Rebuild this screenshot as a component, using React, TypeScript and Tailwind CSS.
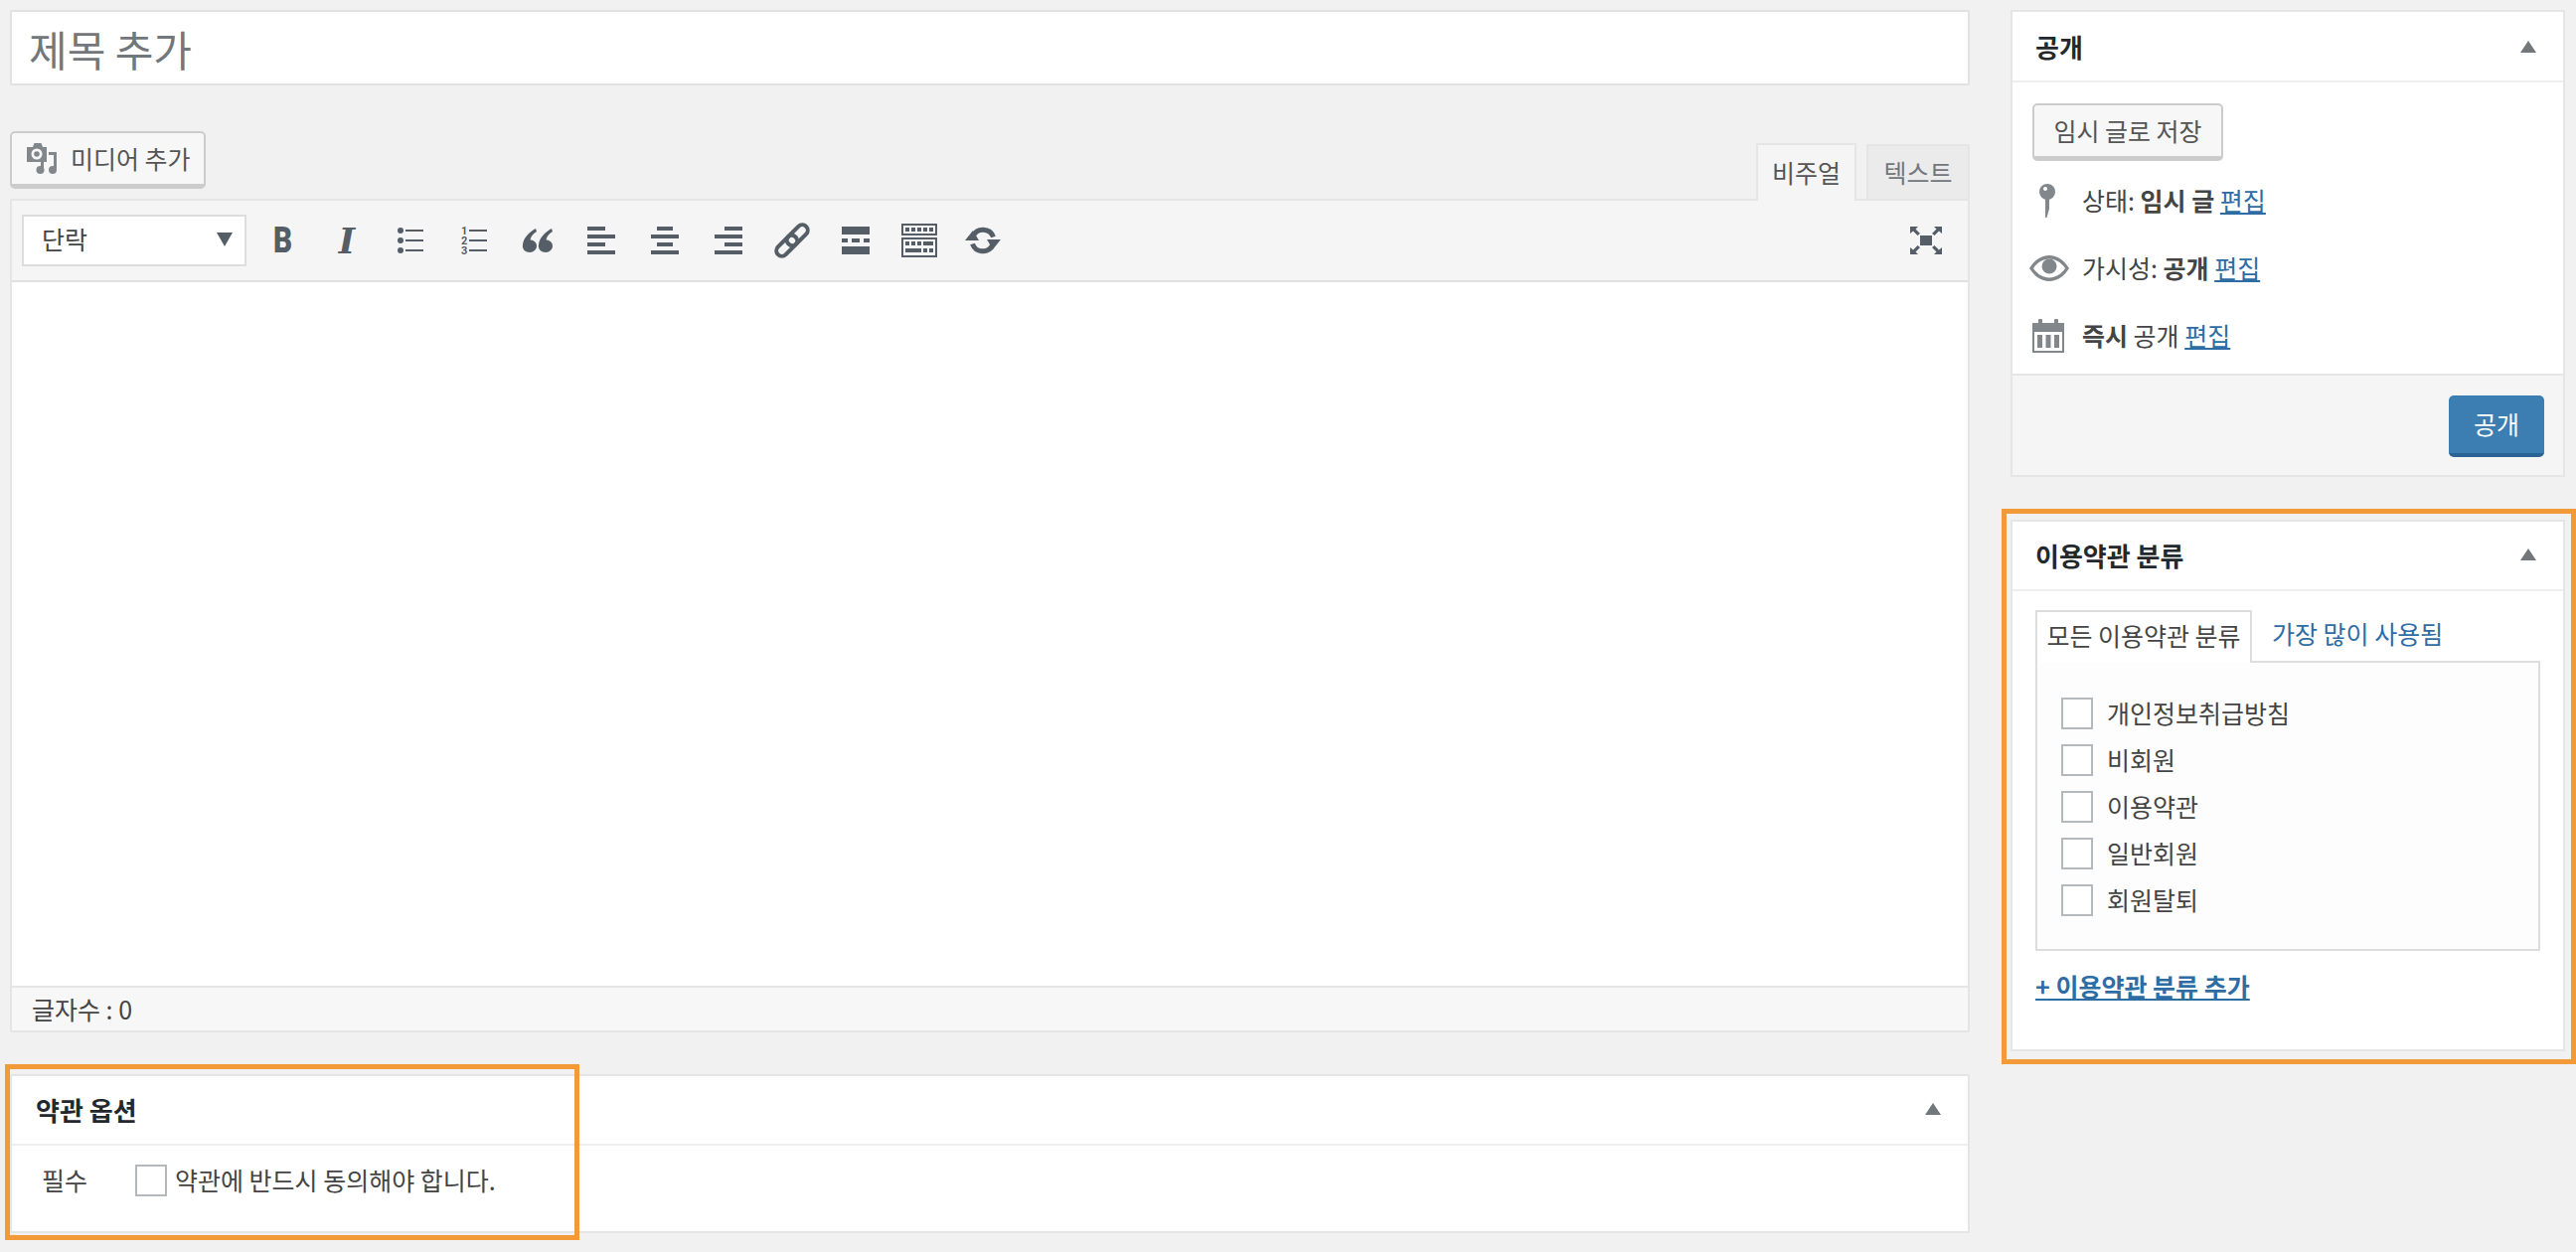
import type { ReactNode } from "react";

const FONT = "font-['Noto_Sans_CJK_KR','Noto_Sans',sans-serif]";

function Triangle() {
  return (
    <svg width="16" height="12" viewBox="0 0 16 12" className="shrink-0">
      <path d="M8 0L16 12H0Z" fill="#72777c" />
    </svg>
  );
}

function MediaIcon() {
  return (
    <svg width="36" height="36" viewBox="0 0 36 36" className="shrink-0">
      <path d="M2 6h6l1.500-4h7L18 6h4v15H2z" fill="#82878c" />
      <circle cx="12" cy="13" r="5.500" fill="#f7f7f7" />
      <circle cx="12" cy="13" r="2.800" fill="#82878c" />
      <path d="M24 11h8v18h-3V14h-5z" fill="#82878c" />
      <circle cx="28" cy="29" r="4" fill="#82878c" />
      <path d="M16 21h3v8h-3z" fill="#82878c" />
      <circle cx="15.500" cy="29" r="4" fill="#82878c" />
    </svg>
  );
}

function ToolButton({ children }: { children: ReactNode }) {
  return (
    <div className="w-[64px] h-[40px] flex items-center justify-center shrink-0 text-[#555d66]">
      {children}
    </div>
  );
}

function Bullets() {
  return (
    <svg width="32" height="32" viewBox="0 0 32 32" fill="#555d66">
      <circle cx="6" cy="6" r="3" />
      <circle cx="6" cy="16" r="3" />
      <circle cx="6" cy="26" r="3" />
      <rect x="11" y="5" width="18" height="2" />
      <rect x="11" y="15" width="18" height="2" />
      <rect x="11" y="25" width="18" height="2" />
    </svg>
  );
}

function Numbers() {
  return (
    <svg width="32" height="32" viewBox="0 0 32 32" fill="#555d66">
      <text x="3" y="10" fontSize="11" fontWeight="700" fontFamily="Roboto, sans-serif">1</text>
      <text x="3" y="20" fontSize="11" fontWeight="700" fontFamily="Roboto, sans-serif">2</text>
      <text x="3" y="30" fontSize="11" fontWeight="700" fontFamily="Roboto, sans-serif">3</text>
      <rect x="11" y="5" width="18" height="2" />
      <rect x="11" y="15" width="18" height="2" />
      <rect x="11" y="25" width="18" height="2" />
    </svg>
  );
}

function Quote() {
  const mark =
    "M13 0C6 4 1 9 0 16c-1 5 3 8 7 8s7-3 7-6.500-3-6-6.500-6C8 8 10.500 5 14 3z";
  return (
    <svg width="32" height="24" viewBox="0 0 32 24" fill="#555d66">
      <path d={mark} transform="translate(1 0)" />
      <path d={mark} transform="translate(17 0)" />
    </svg>
  );
}

function AlignIcon({ side }: { side: "left" | "center" | "right" }) {
  const shortX = side === "left" ? 0 : side === "center" ? 6 : 10;
  return (
    <svg width="28" height="28" viewBox="0 0 28 28" fill="#555d66">
      <rect x={shortX} y="0" width={side === "center" ? 16 : 18} height="4" />
      <rect x="0" y="8" width="28" height="4" />
      <rect x={shortX} y="16" width={side === "center" ? 16 : 18} height="4" />
      <rect x="0" y="24" width="28" height="4" />
    </svg>
  );
}

function LinkIcon() {
  return (
    <svg width="36" height="36" viewBox="0 0 36 36" fill="none" stroke="#555d66">
      <g transform="rotate(-45 18 18)">
        <rect x="-2" y="12.500" width="25" height="11" rx="5.500" strokeWidth="4" />
        <rect x="13" y="12.500" width="25" height="11" rx="5.500" strokeWidth="4" />
      </g>
    </svg>
  );
}

function MoreIcon() {
  return (
    <svg width="28" height="28" viewBox="0 0 28 28" fill="#555d66">
      <rect x="0" y="0" width="28" height="8" />
      <rect x="0" y="12" width="6" height="4" />
      <rect x="10" y="12" width="8" height="4" />
      <rect x="22" y="12" width="6" height="4" />
      <rect x="0" y="20" width="28" height="8" />
    </svg>
  );
}

function KitchenIcon() {
  return (
    <svg width="36" height="34" viewBox="0 0 36 34" fill="#555d66">
      <path d="M0 0h36v12H0zM2 2v8h32V2z" fillRule="evenodd" />
      <path d="M0 14h36v20H0zM2 16v16h32V16z" fillRule="evenodd" />
      <rect x="4" y="4" width="4" height="4" />
      <rect x="10" y="4" width="4" height="4" />
      <rect x="16" y="4" width="4" height="4" />
      <rect x="22" y="4" width="4" height="4" />
      <rect x="28" y="4" width="4" height="4" />
      <rect x="4" y="18" width="4" height="4" />
      <rect x="10" y="18" width="4" height="4" />
      <rect x="16" y="18" width="4" height="4" />
      <rect x="22" y="18" width="10" height="4" />
      <rect x="4" y="25" width="16" height="4" />
      <rect x="22" y="25" width="4" height="4" />
      <rect x="28" y="25" width="4" height="4" />
    </svg>
  );
}

function RefreshIcon() {
  return (
    <svg width="36" height="30" viewBox="0 0 36 30" fill="none">
      <path d="M8 11A11 11 0 0 1 28.500 11.500" stroke="#555d66" strokeWidth="5" />
      <path d="M28 19A11 11 0 0 1 7.500 18.500" stroke="#555d66" strokeWidth="5" />
      <path d="M0 15L8 5l6 10z" fill="#555d66" />
      <path d="M36 14L28 24l-6-10z" fill="#555d66" />
    </svg>
  );
}

function FullscreenIcon() {
  return (
    <svg width="32" height="28" viewBox="0 0 32 28" fill="#555d66">
      <rect x="10" y="9" width="12" height="10" />
      <path d="M0 0h8L5.500 2.500 10 7 7.500 9 3 4.500 0 7z" />
      <path d="M32 0h-8l2.500 2.500L22 7l2.500 2L29 4.500 32 7z" />
      <path d="M0 28h8l-2.500-2.500L10 21l-2.500-2L3 23.500 0 21z" />
      <path d="M32 28h-8l2.500-2.500L22 21l2.500-2L29 23.500 32 21z" />
    </svg>
  );
}

function PinIcon() {
  return (
    <svg width="32" height="36" viewBox="0 0 32 36" fill="#82878c">
      <circle cx="15" cy="9" r="8" />
      <path d="M13 14h4v12l-2.500 9H13z" />
      <circle cx="13" cy="6" r="2" fill="#fff" />
    </svg>
  );
}

function EyeIcon() {
  return (
    <svg width="40" height="26" viewBox="0 0 40 26" fill="#82878c">
      <path
        fillRule="evenodd"
        d="M0 13C5 5 12 0 20 0s15 5 20 13c-5 8-12 13-20 13S5 21 0 13zm4 0c4 6 10 9.500 16 9.500S32 19 36 13C32 7 26 3.500 20 3.500S8 7 4 13z"
      />
      <circle cx="20" cy="11" r="7.500" />
    </svg>
  );
}

function CalendarIcon() {
  return (
    <svg width="32" height="34" viewBox="0 0 32 34" fill="#82878c">
      <path
        fillRule="evenodd"
        d="M0 4h6V1.500a2 2 0 0 1 4 0V4h12V1.500a2 2 0 0 1 4 0V4h6v30H0zm2 9v19h28V13z"
      />
      <rect x="5" y="16" width="5" height="13" />
      <rect x="13.500" y="16" width="5" height="13" />
      <rect x="22" y="16" width="5" height="13" />
    </svg>
  );
}

function BoxHeader({ title, height }: { title: string; height: string }) {
  return (
    <div
      className={`${height} flex items-center justify-between border-b-2 border-[#eeeeee] pl-[23px] pr-[27px]`}
    >
      <span className="text-[26px] font-bold text-[#23282d]">{title}</span>
      <Triangle />
    </div>
  );
}

const terms = ["개인정보취급방침", "비회원", "이용약관", "일반회원", "회원탈퇴"];

export default function App() {
  return (
    <div
      className={`${FONT} min-h-screen w-[2592px] bg-[#f1f1f1] pl-[10px] pt-[10px] flex items-start gap-[41px] text-[25px] text-[#444444]`}
    >
      {/* Main column */}
      <div className="w-[1972px] shrink-0">
        <div className="h-[76px] bg-white border-2 border-[#e2e2e2] flex items-center pl-[17px] text-[42px] text-[#72777c]">
          제목 추가
        </div>

        <div className="mt-[46px] h-[68px] flex justify-between">
          <button className="h-[58px] w-[197px] bg-[#f7f7f7] border-2 border-b-[5px] border-[#cccccc] rounded-[5px] flex items-center pl-[13px] gap-[10px] text-[25px] text-[#555555]">
            <MediaIcon />
            미디어 추가
          </button>
          <div className="flex items-end gap-[10px] z-10 -mb-[2px]">
            <div className="w-[101px] h-[58px] bg-[#f5f5f5] border-2 border-b-0 border-[#e5e5e5] flex items-center justify-center text-[#555555]">
              비주얼
            </div>
            <div className="w-[104px] h-[57px] bg-[#ebebeb] border-2 border-[#e5e5e5] flex items-center justify-center text-[#72777c]">
              텍스트
            </div>
          </div>
        </div>

        <div className="border-2 border-[#e5e5e5] bg-white">
          <div className="h-[82px] bg-[#f5f5f5] border-b-2 border-[#e0e0e0] flex items-center pl-[10px] pr-[10px]">
            <div className="w-[226px] h-[52px] bg-white border-2 border-[#dddddd] flex items-center justify-between pl-[18px] pr-[12px] pb-[2px] text-[#444444]">
              <span>단락</span>
              <svg width="16" height="16" viewBox="0 0 16 16">
                <path d="M0 1h16L8 15z" fill="#555d66" />
              </svg>
            </div>
            <div className="ml-[5px] flex items-center">
              <ToolButton>
                <span className="font-['Roboto',sans-serif] font-black text-[36px] leading-none inline-block scale-x-[0.82]">
                  B
                </span>
              </ToolButton>
              <ToolButton>
                <span className="font-['DejaVu_Serif',serif] font-bold italic text-[35px] leading-none">
                  I
                </span>
              </ToolButton>
              <ToolButton>
                <Bullets />
              </ToolButton>
              <ToolButton>
                <Numbers />
              </ToolButton>
              <ToolButton>
                <Quote />
              </ToolButton>
              <ToolButton>
                <AlignIcon side="left" />
              </ToolButton>
              <ToolButton>
                <AlignIcon side="center" />
              </ToolButton>
              <ToolButton>
                <AlignIcon side="right" />
              </ToolButton>
              <ToolButton>
                <LinkIcon />
              </ToolButton>
              <ToolButton>
                <MoreIcon />
              </ToolButton>
              <ToolButton>
                <KitchenIcon />
              </ToolButton>
              <ToolButton>
                <RefreshIcon />
              </ToolButton>
            </div>
            <div className="ml-auto">
              <ToolButton>
                <FullscreenIcon />
              </ToolButton>
            </div>
          </div>
          <div className="h-[708px] bg-white" />
          <div className="h-[45px] bg-[#f7f7f7] border-t-2 border-[#e5e5e5] flex items-center pl-[20px] text-[#444444]">
            글자수 : 0
          </div>
        </div>

        {/* 약관 옵션 */}
        <div className="relative mt-[42px] h-[160px] bg-white border-2 border-[#e5e5e5]">
          <div className="h-[70px] flex items-center justify-between border-b-2 border-[#eeeeee] pl-[24px] pr-[27px] pb-[2px]">
            <span className="text-[26px] font-bold text-[#23282d]">약관 옵션</span>
            <Triangle />
          </div>
          <div className="h-[70px] flex items-center pl-[30px]">
            <span className="w-[94px]">필수</span>
            <span className="w-[32px] h-[32px] bg-white border-2 border-[#b4b9be] shrink-0" />
            <span className="ml-[8px]">약관에 반드시 동의해야 합니다.</span>
          </div>
          <div className="absolute left-[-7px] top-[-12px] w-[578px] h-[177px] border-[5px] border-[#f29a38] pointer-events-none" />
        </div>
      </div>

      {/* Sidebar */}
      <div className="w-[558px] shrink-0">
        <div className="bg-white border-2 border-[#e5e5e5]">
          <BoxHeader title="공개" height="h-[71px]" />
          <div className="h-[293px] pl-[20px] pt-[21px]">
            <button className="w-[192px] h-[58px] bg-[#f7f7f7] border-2 border-b-[5px] border-[#cccccc] rounded-[5px] text-[#555555]">
              임시 글로 저장
            </button>
            <div className="mt-[6px] h-[68px] flex items-center">
              <div className="w-[50px] flex items-center">
                <PinIcon />
              </div>
              <span>
                상태: <b className="font-semibold">임시 글</b>{" "}
                <a className="text-[#2e6da4] underline">편집</a>
              </span>
            </div>
            <div className="h-[68px] flex items-center">
              <div className="w-[50px] flex items-center -ml-[3px] mr-[3px]">
                <EyeIcon />
              </div>
              <span>
                가시성: <b className="font-semibold">공개</b>{" "}
                <a className="text-[#2e6da4] underline">편집</a>
              </span>
            </div>
            <div className="h-[68px] flex items-center">
              <div className="w-[50px] flex items-center">
                <CalendarIcon />
              </div>
              <span>
                <b className="font-semibold">즉시</b> 공개{" "}
                <a className="text-[#2e6da4] underline">편집</a>
              </span>
            </div>
          </div>
          <div className="h-[102px] bg-[#f5f5f5] border-t-2 border-[#e5e5e5] flex justify-end pt-[20px] pr-[19px]">
            <button className="w-[96px] h-[62px] bg-[#3c7eb1] border-b-[4px] border-[#2a6496] rounded-[5px] text-white">
              공개
            </button>
          </div>
        </div>

        <div className="relative mt-[43px] bg-white border-2 border-[#e5e5e5]">
          <BoxHeader title="이용약관 분류" height="h-[70px] pb-[2px]" />
          <div className="pl-[23px] pr-[23px] pt-[19px] pb-[47px]">
            <div className="flex items-end">
              <div className="relative z-10 w-[218px] h-[53px] -mb-[2px] pb-[4px] bg-white border-2 border-b-0 border-[#dddddd] flex items-center justify-center text-[#444444]">
                모든 이용약관 분류
              </div>
              <a className="ml-[20px] h-[51px] pb-[4px] flex items-center text-[#2e6da4]">
                가장 많이 사용됨
              </a>
            </div>
            <div className="h-[292px] bg-[#fdfdfd] border-2 border-[#dddddd] pt-[27px] pl-[24px]">
              {terms.map((term) => (
                <div key={term} className="h-[47px] flex items-center gap-[14px]">
                  <span className="w-[32px] h-[32px] bg-white border-2 border-[#b4b9be] shrink-0" />
                  <span>{term}</span>
                </div>
              ))}
            </div>
            <a className="mt-[20px] h-[32px] flex items-center font-semibold text-[#2e6da4] underline">
              + 이용약관 분류 추가
            </a>
          </div>
          <div className="absolute left-[-11px] top-[-13px] w-[578px] h-[559px] border-[5px] border-[#f29a38] pointer-events-none" />
        </div>
      </div>
    </div>
  );
}
